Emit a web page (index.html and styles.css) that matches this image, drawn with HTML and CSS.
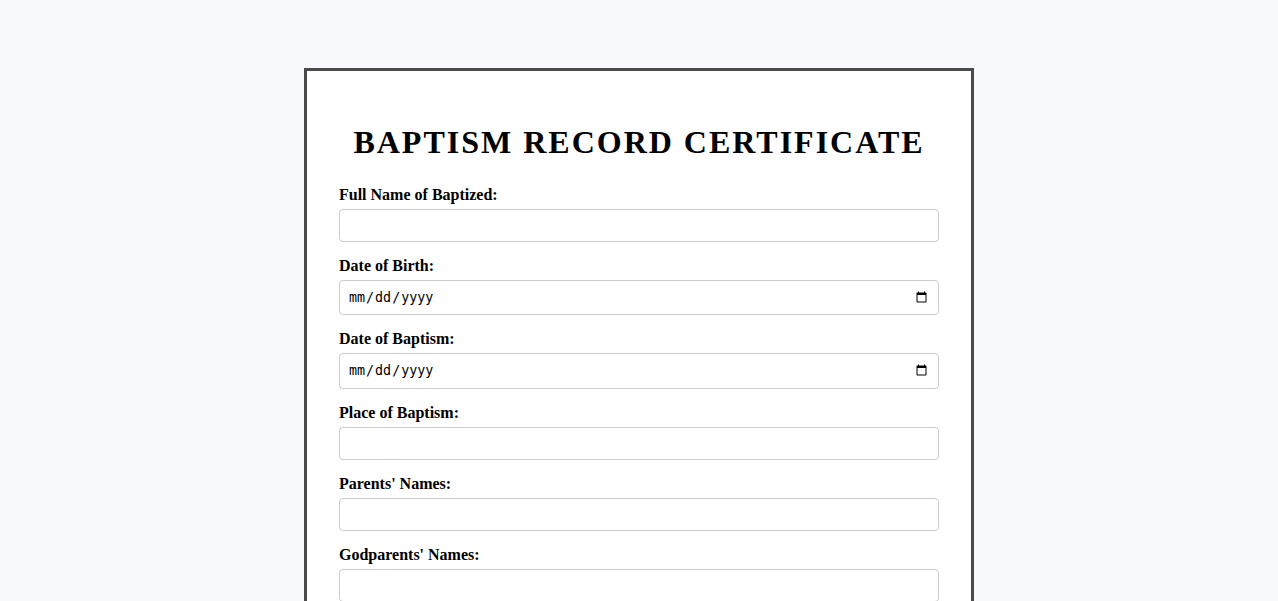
FILE: index.html
```html
<!DOCTYPE html>
<html lang="en">
<head>
<meta charset="utf-8">
<title>Baptism Record Certificate</title>
<link rel="stylesheet" href="styles.css">
</head>
<body>
<div class="certificate">
  <h1 class="title">BAPTISM RECORD CERTIFICATE</h1>
  <form class="form">
    <div class="group">
      <label class="label" for="name">Full Name of Baptized:</label>
      <input class="field" type="text" id="name">
    </div>
    <div class="group">
      <label class="label" for="dob">Date of Birth:</label>
      <input class="field" type="date" id="dob">
    </div>
    <div class="group">
      <label class="label" for="dobap">Date of Baptism:</label>
      <input class="field" type="date" id="dobap">
    </div>
    <div class="group">
      <label class="label" for="place">Place of Baptism:</label>
      <input class="field" type="text" id="place">
    </div>
    <div class="group">
      <label class="label" for="parents">Parents' Names:</label>
      <input class="field" type="text" id="parents">
    </div>
    <div class="group">
      <label class="label" for="godparents">Godparents' Names:</label>
      <input class="field" type="text" id="godparents">
    </div>
    <div class="group">
      <label class="label" for="officiant">Officiant's Name:</label>
      <input class="field" type="text" id="officiant">
    </div>
  </form>
</div>
</body>
</html>
```
FILE: styles.css
```css
html, body {
  margin: 0;
  padding: 0;
}
body {
  background: #f8f9fd;
  font-family: "Liberation Serif", "Times New Roman", serif;
  color: #000;
}
.certificate {
  width: 600px;
  margin: 68px auto 40px;
  padding: 32px;
  background: #fff;
  border: 3px solid #4a4a4a;
}
.title {
  margin: 20.5px 0 25.5px;
  text-align: center;
  font-size: 32px;
  font-weight: bold;
  letter-spacing: 2px;
  white-space: nowrap;
}
.form {
  display: flex;
  flex-direction: column;
}
.group {
  display: flex;
  flex-direction: column;
  margin-bottom: 15px;
}
.label {
  font-size: 16px;
  font-weight: bold;
  margin-bottom: 5px;
}
.field {
  box-sizing: border-box;
  width: 100%;
  padding: 8px;
  border: 1px solid #ccc;
  border-radius: 4px;
  font-family: "DejaVu Sans Mono", monospace;
  font-size: 13.33px;
  background: #fff;
}
```
